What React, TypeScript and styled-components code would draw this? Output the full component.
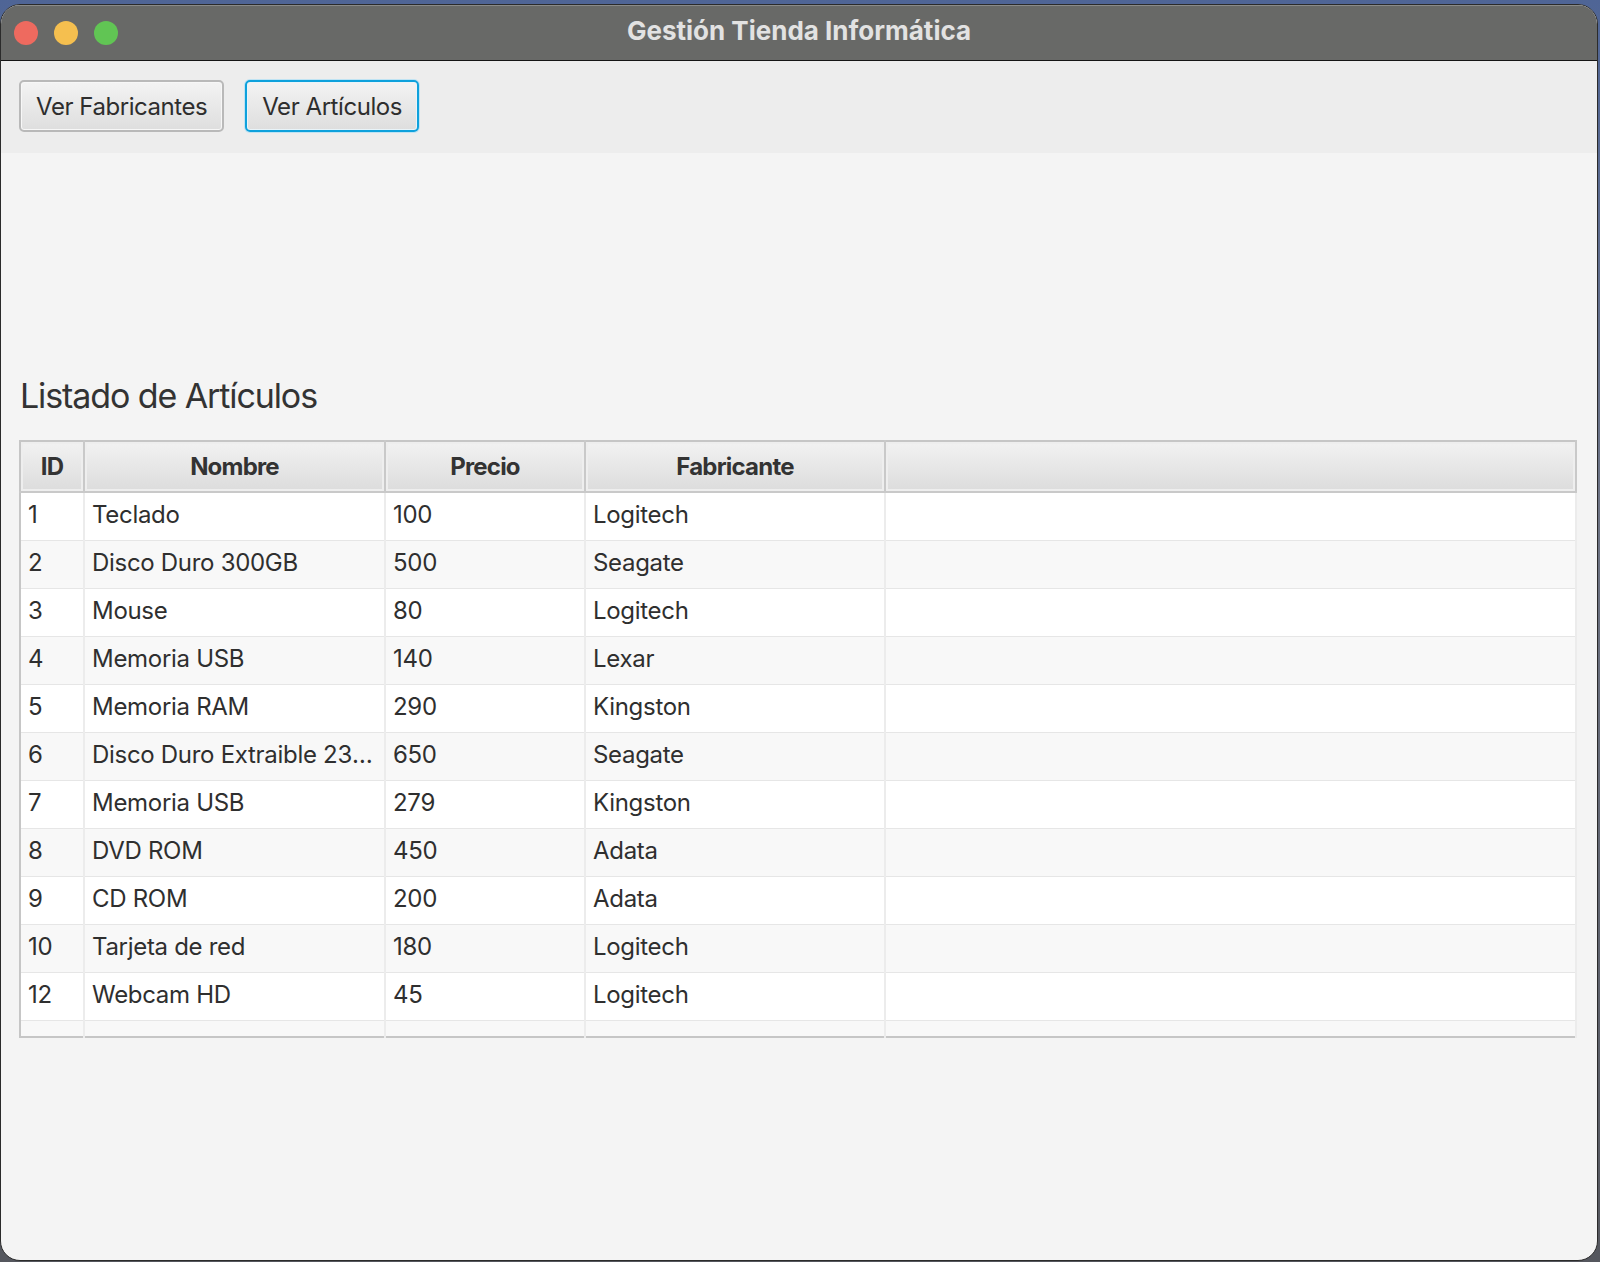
import styled, { createGlobalStyle } from 'styled-components'

const GlobalStyle = createGlobalStyle`
  html, body {
    margin: 0;
    padding: 0;
  }
  body {
    background: linear-gradient(180deg, #4f6596 0%, #6d7384 40%, #55575e 100%);
    font-family: Inter, "Noto Sans", "Liberation Sans", sans-serif;
  }
`

const Desktop = styled.div`
  height: 1262px;
  box-sizing: border-box;
  padding: 4px 2px 1px 0;
  display: flex;
`

const Window = styled.div`
  flex: 1;
  display: flex;
  flex-direction: column;
  border: 1px solid #2b2b2b;
  border-radius: 20px;
  overflow: hidden;
  background: #f4f4f4;
`

const TitleBar = styled.div`
  height: 55px;
  flex-shrink: 0;
  display: grid;
  grid-template-columns: 1fr auto 1fr;
  align-items: center;
  background: #686967;
  border-bottom: 1px solid #151515;
  box-shadow: inset 0 1px 0 #8a8b89;
`

const Lights = styled.div`
  display: flex;
  gap: 16px;
  padding-left: 13px;
`

const Light = styled.span<{ $color: string }>`
  width: 24px;
  height: 24px;
  border-radius: 50%;
  background: ${(p) => p.$color};
`

const Title = styled.div`
  font-weight: 700;
  font-size: 26px;
  color: #e2e2e2;
  margin-top: -4px;
`

const Toolbar = styled.div`
  height: 92px;
  flex-shrink: 0;
  box-sizing: border-box;
  display: flex;
  align-items: flex-start;
  gap: 21px;
  padding: 19px 18px 0;
  background: #ededed;
`

const Button = styled.button<{ $focused?: boolean }>`
  height: 52px;
  box-sizing: border-box;
  padding: 0 15px;
  font-family: inherit;
  font-size: 24px;
  letter-spacing: -0.45px;
  color: #2e2e2e;
  border-radius: 5px;
  background: linear-gradient(180deg, #f3f3f3 0%, #dedede 100%);
  border: ${(p) => (p.$focused ? '2px solid #0ea1dc' : '2px solid #b9b9b9')};
  box-shadow: ${(p) =>
    p.$focused ? '0 0 0 1px #bfe3f3, inset 0 0 0 1px #e9f4f9' : 'inset 0 0 0 1px #f7f7f7'};
  cursor: default;
`

const Content = styled.div`
  flex: 1;
  padding: 220px 20px 0 18px;
`

const Heading = styled.h1`
  margin: 0 0 22px 1px;
  font-size: 34px;
  font-weight: 400;
  letter-spacing: -1.1px;
  color: #333;
  line-height: 45px;
`

const Table = styled.table`
  width: 100%;
  table-layout: fixed;
  border-collapse: collapse;
  border: 2px solid #c6c6c6;
  background: #f8f8f8;
`

const HeadCell = styled.th`
  height: 49px;
  padding: 0;
  font-size: 24px;
  font-weight: 700;
  color: #333;
  letter-spacing: -0.8px;
  text-align: center;
  background: linear-gradient(180deg, #f2f2f2 0%, #dcdcdc 100%);
  border-right: 2px solid #c9c9c9;
  border-bottom: 2px solid #c9c9c9;
  box-shadow: inset 0 0 0 2px #eeeeee;
`

const Row = styled.tr<{ $alt: boolean }>`
  background: ${(p) => (p.$alt ? '#f8f8f8' : '#ffffff')};
`

const Cell = styled.td`
  height: 43px;
  padding: 0 6px 4px 7px;
  font-size: 24px;
  letter-spacing: -0.3px;
  color: #2f2f2f;
  white-space: nowrap;
  overflow: hidden;
  text-overflow: ellipsis;
  border-right: 2px solid #ececec;
  border-bottom: 1px solid #e6e6e6;
`

const FillerCell = styled.td`
  height: 15px;
  padding: 0;
  border-right: 2px solid #ececec;
`

const articulos = [
  { id: 1, nombre: 'Teclado', precio: 100, fabricante: 'Logitech' },
  { id: 2, nombre: 'Disco Duro 300GB', precio: 500, fabricante: 'Seagate' },
  { id: 3, nombre: 'Mouse', precio: 80, fabricante: 'Logitech' },
  { id: 4, nombre: 'Memoria USB', precio: 140, fabricante: 'Lexar' },
  { id: 5, nombre: 'Memoria RAM', precio: 290, fabricante: 'Kingston' },
  { id: 6, nombre: 'Disco Duro Extraible 230GB', precio: 650, fabricante: 'Seagate' },
  { id: 7, nombre: 'Memoria USB', precio: 279, fabricante: 'Kingston' },
  { id: 8, nombre: 'DVD ROM', precio: 450, fabricante: 'Adata' },
  { id: 9, nombre: 'CD ROM', precio: 200, fabricante: 'Adata' },
  { id: 10, nombre: 'Tarjeta de red', precio: 180, fabricante: 'Logitech' },
  { id: 12, nombre: 'Webcam HD', precio: 45, fabricante: 'Logitech' },
]

export default function App() {
  return (
    <>
      <GlobalStyle />
      <Desktop>
        <Window>
          <TitleBar>
            <Lights>
              <Light $color="#ee6a5f" />
              <Light $color="#f5bf4f" />
              <Light $color="#61c554" />
            </Lights>
            <Title>Gestión Tienda Informática</Title>
            <div />
          </TitleBar>

          <Toolbar>
            <Button>Ver Fabricantes</Button>
            <Button $focused>Ver Artículos</Button>
          </Toolbar>

          <Content>
            <Heading>Listado de Artículos</Heading>
            <Table>
              <colgroup>
                <col style={{ width: 64 }} />
                <col style={{ width: 301 }} />
                <col style={{ width: 200 }} />
                <col style={{ width: 300 }} />
                <col />
              </colgroup>
              <thead>
                <tr>
                  <HeadCell>ID</HeadCell>
                  <HeadCell>Nombre</HeadCell>
                  <HeadCell>Precio</HeadCell>
                  <HeadCell>Fabricante</HeadCell>
                  <HeadCell />
                </tr>
              </thead>
              <tbody>
                {articulos.map((a, i) => (
                  <Row key={a.id} $alt={i % 2 === 1}>
                    <Cell>{a.id}</Cell>
                    <Cell>{a.nombre}</Cell>
                    <Cell>{a.precio}</Cell>
                    <Cell>{a.fabricante}</Cell>
                    <Cell />
                  </Row>
                ))}
                <Row $alt>
                  <FillerCell />
                  <FillerCell />
                  <FillerCell />
                  <FillerCell />
                  <FillerCell />
                </Row>
              </tbody>
            </Table>
          </Content>
        </Window>
      </Desktop>
    </>
  )
}
